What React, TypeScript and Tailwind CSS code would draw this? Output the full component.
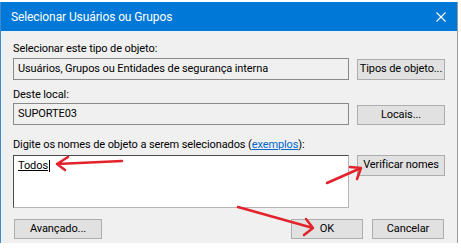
import React from 'react'

const font = { fontFamily: 'Roboto, "Liberation Sans", Arial, sans-serif' }

function Btn({ label, className }: { label: string; className: string }) {
  return (
    <div
      className={`flex items-center justify-center whitespace-nowrap border border-[#adadad] bg-[#e1e1e1] text-[11px] tracking-[-0.1px] text-black ${className}`}
    >
      {label}
    </div>
  )
}

function Arrows() {
  return (
    <svg className="pointer-events-none absolute left-0 top-0" width="461" height="248">
      <g stroke="#e3222c" strokeWidth="2.5" fill="none" strokeLinecap="round" strokeLinejoin="round">
        <path d="M122 161 L57 164 M68 157 L57 164 L65 170" />
        <path d="M327 183 L361 168 M350 167 L361 168 L357 179" />
        <path d="M238 207 L313 228 M306 219 L313 228 L304 235" />
      </g>
    </svg>
  )
}

export default function App() {
  return (
    <div className="relative h-[248px] w-[461px] overflow-hidden bg-white" style={font}>
      <div className="mt-[2px] flex h-[241px] w-[458px] flex-col border-x border-l-[#3c8ad0] border-r-[#9a9a9a] bg-[#f0f0f0]">
        {/* title bar */}
        <div className="flex h-[29px] shrink-0 items-center justify-between bg-[#0078d7] pl-[10px] pr-[10px] text-white">
          <span className="text-[12px] tracking-[-0.1px]">Selecionar Usuários ou Grupos</span>
          <svg width="10" height="10" viewBox="0 0 10 10" className="mr-[1px]">
            <path d="M0.5 0.5 L9.5 9.5 M9.5 0.5 L0.5 9.5" stroke="white" strokeWidth="1.1" />
          </svg>
        </div>

        <div className="flex flex-col pl-[12px] pr-[12px] text-[11px] tracking-[-0.1px] text-black">
          <div className="mt-[10px] leading-[15px]">Selecionar este tipo de objeto:</div>
          <div className="mt-[2px] flex items-start justify-between">
            <div className="flex h-[22px] w-[336px] items-center border border-[#8a8a8a] pl-[4px]">
              Usuários, Grupos ou Entidades de segurança interna
            </div>
            <Btn label="Tipos de objeto..." className="mt-[1px] h-[21px] w-[88px]" />
          </div>

          <div className="mt-[7px] leading-[15px]">Deste local:</div>
          <div className="mt-[1px] flex items-start justify-between">
            <div className="flex h-[22px] w-[336px] items-center border border-[#8a8a8a] pl-[4px]">SUPORTE03</div>
            <Btn label="Locais..." className="mt-[2px] h-[20px] w-[88px]" />
          </div>

          <div className="mt-[12px] leading-[15px]">
            Digite os nomes de objeto a serem selecionados (
            <span className="text-[#0066cc] underline">exemplos</span>):
          </div>
          <div className="mt-[3px] flex items-start justify-between">
            <div className="h-[53px] w-[336px] border border-[#b5b5b5] border-l-[#4a4a4a] border-t-[#4a4a4a] bg-white pl-[4px] pt-[2px]">
              <span className="inline-block border-r border-black pr-[1px] leading-[12px] underline">Todos</span>
            </div>
            <Btn label="Verificar nomes" className="h-[21px] w-[88px]" />
          </div>

          <div className="mt-[11px] flex items-center">
            <Btn label="Avançado..." className="ml-[1px] h-[20px] w-[88px]" />
            <Btn label="OK" className="ml-auto h-[20px] w-[72px]" />
            <Btn label="Cancelar" className="ml-[9px] mr-[1px] h-[20px] w-[72px]" />
          </div>
        </div>
      </div>
      <Arrows />
    </div>
  )
}
